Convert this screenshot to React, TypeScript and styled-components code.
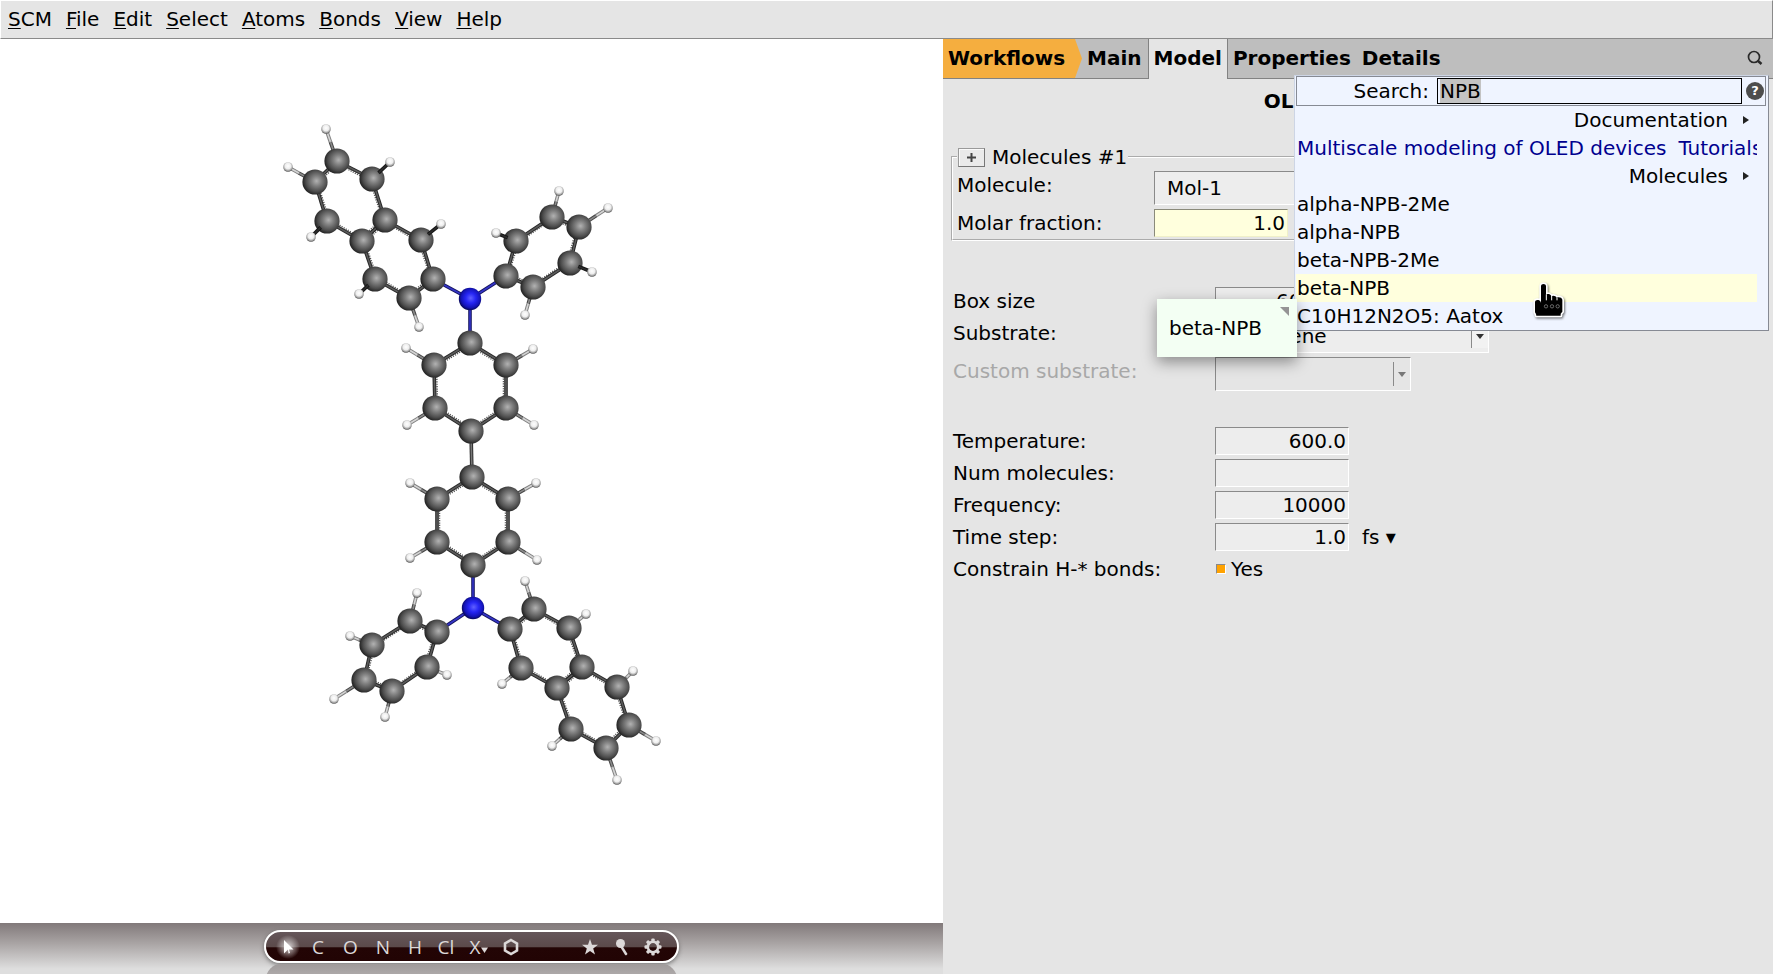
import React from 'react';
import styled, { createGlobalStyle, css } from 'styled-components';

const GlobalStyle = createGlobalStyle`
  *, *::before, *::after { box-sizing: border-box; }
  html, body, #root { height: 100%; }
  body {
    margin: 0;
    background: #e5e5e5;
    color: #000;
    font: 20px/28px "DejaVu Sans", sans-serif;
  }
  button, input, select { font: inherit; color: inherit; }
`;

const bevelIn = css`
  border: 1px solid;
  border-color: #8a8a8a #fff #fff #8a8a8a;
`;

const Window = styled.div`
  display: flex;
  flex-direction: column;
  min-height: 100%;
`;

const MenuBar = styled.nav`
  display: flex;
  height: 39px;
  padding: 0 0 2px;
  border: 1px solid;
  border-color: #fff #8a8a8a #8a8a8a #fff;
`;

const MenuItem = styled.button`
  padding: 0 7px;
  border: 0;
  background: none;
  line-height: 34px;

  u { text-decoration-thickness: 1px; text-underline-offset: 2px; }
`;

const Workspace = styled.main`
  flex: 1;
  display: grid;
  grid-template-columns: minmax(0, 943fr) minmax(0, 830fr);
`;

const Viewer = styled.section`
  display: flex;
  flex-direction: column;
  background: #fff;
`;

const Scene = styled.svg`
  flex: 1;
  display: block;
  width: 100%;
  min-height: 0;
`;

const Dock = styled.div`
  display: flex;
  flex-direction: column;
  align-items: center;
  gap: 1px;
  height: 51px;
  padding-top: 7px;
  overflow: hidden;
  background: linear-gradient(#81797a, #a9a4a4 40%, #dedede 90%);
`;

const Pill = styled.div`
  flex: none;
  display: flex;
  align-items: center;
  width: 415px;
  height: 33px;
  padding: 0 10px;
  border: 2px solid #fff;
  border-radius: 17px;
  background: linear-gradient(#65565a 0, #5b4a4a 52%, #230505 54%, #220404);
  box-shadow: 0 2px 4px #3338;
`;

const PillReflection = styled.div`
  flex: none;
  width: 411px;
  height: 30px;
  border-radius: 15px;
  background: linear-gradient(#a09b9b, #c4c2c2);
`;

const Tool = styled.button<{ $w?: number }>`
  display: flex;
  align-items: center;
  justify-content: center;
  width: ${(p) => p.$w ?? 32}px;
  height: 28px;
  padding: 0;
  border: 0;
  background: none;
  color: #dcd8d8;
  font: 19px/28px "Open Sans", sans-serif;
`;

const ToolGap = styled.span`
  flex: 1;
`;

const Panel = styled.section`
  position: relative;
  min-width: 0;
`;

const Tabs = styled.div`
  display: flex;
  height: 40px;
  background: #bebebe;
  border-bottom: 1px solid #828282;
`;

const Tab = styled.button<{ $active?: boolean }>`
  padding: 0 6px 2px 5px;
  border: 0;
  background: none;
  font-weight: bold;
  line-height: 30px;
  ${(p) =>
    p.$active &&
    css`
      height: 40px;
      background: #e5e5e5;
      border: solid #828282;
      border-width: 0 1px;
      padding: 0 5px 3px;
    `}
`;

const WorkflowTab = styled(Tab)`
  width: 139px;
  text-align: left;
  background: #f5ae3f;
  clip-path: polygon(0 0, 132px 0, 100% 50%, 132px 100%, 0 100%);
`;

const SearchButton = styled.button`
  display: flex;
  align-items: center;
  justify-content: center;
  width: 36px;
  height: 38px;
  margin-left: auto;
  padding: 0;
  border: 0;
  background: none;
`;

const Form = styled.form`
  display: flex;
  flex-direction: column;
  padding: 8px 8px 0;
`;

const Title = styled.h1`
  margin: 0 0 30px;
  font-size: 20px;
  line-height: 28px;
  text-align: center;
`;

const Group = styled.fieldset`
  min-width: 0;
  margin: 0 0 44px;
  padding: 0 0 0 4px;
  border: 2px groove #fff;
`;

const GroupLegend = styled.legend`
  display: flex;
  align-items: center;
  gap: 7px;
  height: 24px;
  padding: 0 1px;
`;

const AddButton = styled.button`
  display: flex;
  align-items: center;
  justify-content: center;
  width: 27px;
  height: 19px;
  padding: 0;
  background: #eaeaea;
  border: 1px solid;
  border-color: #9a9a9a #777 #777 #9a9a9a;
  box-shadow: inset 1px 1px #fafafa;
`;

const Row = styled.div<{ $label?: number; $disabled?: boolean }>`
  display: grid;
  grid-template-columns: ${(p) => p.$label ?? 262}px auto 1fr;
  padding: 2px 0;
  min-height: 32px;
  color: ${(p) => (p.$disabled ? '#a8a8a8' : '#000')};
`;

const Settings = styled.div`
  padding-left: 2px;
`;

const Spacer = styled.div`
  height: 32px;
`;

const NumberBox = styled.input<{ $changed?: boolean }>`
  ${bevelIn}
  display: block;
  width: 134px;
  height: 28px;
  padding: 0 2px;
  text-align: right;
  background: ${(p) => (p.$changed ? '#ffffdd' : '#ededed')};
  ${(p) => p.$changed && 'border-color: #8a8a7a #f0f0c8 #f0f0c8 #8a8a7a;'}
`;

const SelectFrame = styled.span<{ $w: number; $off?: boolean }>`
  ${bevelIn}
  display: flex;
  align-items: center;
  width: ${(p) => p.$w}px;
  height: 34px;
  background: ${(p) => (p.$off ? '#e5e5e5' : '#ededed')};
`;

const SelectBox = styled.select`
  flex: 1;
  min-width: 0;
  height: 32px;
  padding: 0 0 0 12px;
  border: 0;
  background: none;
  appearance: none;
`;

const SelectArrow = styled.span<{ $off?: boolean }>`
  display: flex;
  align-items: center;
  justify-content: center;
  width: 17px;
  height: 24px;
  border-left: 1px solid #8a8a8a;
  background: ${(p) => (p.$off ? 'none' : '#f2f2f2')};
`;

const UnitButton = styled.button`
  justify-self: start;
  padding: 0;
  margin-left: 13px;
  border: 0;
  background: none;
`;

const CheckLabel = styled.label`
  display: flex;
  align-items: center;
  gap: 5px;
  height: 28px;
`;

const CheckBox = styled.input`
  ${bevelIn}
  appearance: none;
  width: 10px;
  height: 10px;
  margin: 0 0 0 1px;
  background: #e5e5e5;
  &:checked { background: #ffa200; }
`;

const Popup = styled.aside`
  position: absolute;
  top: 36px;
  right: 4px;
  width: 475px;
  padding: 0 2px 0 1px;
  background: #eff4ff;
  border: 1px solid;
  border-color: #cdd5e5 #868a94 #868a94 #cdd5e5;
`;

const SearchRow = styled.div`
  display: flex;
  align-items: center;
  height: 30px;
  border: 1px solid #868a94;
`;

const SearchLabel = styled.label`
  flex: 1;
  padding-right: 8px;
  text-align: right;
`;

const SearchInput = styled.input`
  width: 305px;
  height: 26px;
  padding: 0 2px;
  border: 1px solid #000;
  background: #eff4ff;
  outline: none;
  &::selection { background: #c3c3c3; color: #000; }
`;

const HelpButton = styled.button`
  width: 18px;
  height: 18px;
  margin: 0 1px 0 4px;
  padding: 0;
  border: 0;
  border-radius: 50%;
  background: #4d4d4d;
  color: #fff;
  font-size: 13px;
  font-weight: bold;
  line-height: 18px;
`;

const Results = styled.div`
  display: flex;
  flex-direction: column;
  margin-right: 9px;
`;

const Heading = styled.button`
  display: flex;
  align-items: center;
  justify-content: flex-end;
  gap: 15px;
  height: 28px;
  padding: 0 8px 0 0;
  border: 0;
  background: none;
`;

const Result = styled.a<{ $hot?: boolean; $doc?: boolean }>`
  display: flex;
  gap: 12px;
  height: 28px;
  padding-left: 1px;
  overflow: hidden;
  white-space: nowrap;
  text-decoration: none;
  color: ${(p) => (p.$doc ? '#00008f' : '#000')};
  background: ${(p) => (p.$hot ? '#ffffdd' : 'none')};
`;

const Balloon = styled.div`
  position: absolute;
  top: 223px;
  right: 471px;
  width: 140px;
  height: 58px;
  padding: 15px 12px;
  background: #f3fff3;
  box-shadow: 0 5px 14px #0006;

  &::after {
    content: "";
    position: absolute;
    top: 8px;
    right: 8px;
    border: solid transparent;
    border-width: 9px 0 0 9px;
    border-top-color: #949494;
  }
`;

const Pointer = styled.svg`
  position: absolute;
  top: 205px;
  right: 200px;
`;

type Kind = 'C' | 'N' | 'H';
type Atom = [Kind, number, number];

const atoms: Atom[] = [
  ['C', 337, 161], ['C', 315, 182], ['C', 372, 179], ['C', 327, 221], ['C', 385, 220],
  ['C', 362, 241], ['C', 421, 240], ['C', 375, 279], ['C', 409, 298], ['C', 433, 279],
  ['N', 470, 299], ['C', 506, 276], ['C', 516, 241], ['C', 552, 217], ['C', 579, 227],
  ['C', 570, 263], ['C', 533, 287], ['C', 470, 343], ['C', 434, 365], ['C', 506, 365],
  ['C', 435, 408], ['C', 506, 408], ['C', 471, 431], ['C', 472, 477], ['C', 437, 499],
  ['C', 508, 499], ['C', 437, 542], ['C', 508, 542], ['C', 473, 565], ['N', 473, 608],
  ['C', 437, 632], ['C', 410, 621], ['C', 372, 645], ['C', 364, 680], ['C', 392, 691],
  ['C', 427, 667], ['C', 510, 629], ['C', 534, 609], ['C', 569, 628], ['C', 521, 668],
  ['C', 557, 688], ['C', 582, 667], ['C', 617, 687], ['C', 571, 729], ['C', 606, 748],
  ['C', 629, 725],
];

// [carbon index, x, y, drawn dark in front of the carbon]
const hydrogens: [number, number, number, boolean][] = [
  [0, 326, 129, false], [1, 288, 167, false], [2, 390, 162, true], [3, 311, 237, true],
  [6, 441, 224, true], [7, 359, 294, true], [8, 419, 327, false], [12, 496, 233, true],
  [13, 559, 191, false], [14, 608, 208, false], [15, 592, 272, true], [16, 525, 315, false],
  [18, 406, 348, false], [19, 533, 349, false], [20, 407, 425, false], [21, 534, 425, false],
  [24, 410, 483, false], [25, 536, 483, false], [26, 410, 558, false], [27, 537, 560, false],
  [31, 417, 593, false], [32, 350, 636, false], [33, 334, 699, false], [34, 385, 717, false],
  [35, 447, 675, false], [37, 525, 581, false], [38, 586, 614, false], [39, 502, 684, false],
  [42, 633, 671, false], [43, 552, 746, false], [44, 617, 780, false], [45, 656, 741, false],
];

const rings = [
  [0, 2, 4, 5, 3, 1], [4, 6, 9, 8, 7, 5], [11, 12, 13, 14, 15, 16], [17, 19, 21, 22, 20, 18],
  [23, 25, 27, 28, 26, 24], [30, 31, 32, 33, 34, 35], [36, 37, 38, 41, 40, 39],
  [41, 42, 45, 44, 43, 40],
];

const links: [number, number][] = [
  [10, 9], [10, 11], [10, 17], [22, 23], [29, 28], [29, 30], [29, 36],
];

const radius: Record<Kind, number> = { C: 12.6, N: 11.2, H: 4.8 };

function Rod({ x1, y1, x2, y2, edge, core }: {
  x1: number; y1: number; x2: number; y2: number; edge: string; core: string;
}) {
  return (
    <g>
      <line x1={x1} y1={y1} x2={x2} y2={y2} stroke={edge} strokeWidth={3.6} />
      <line x1={x1} y1={y1} x2={x2} y2={y2} stroke={core} strokeWidth={1.6} />
    </g>
  );
}

function Ring({ members }: { members: number[] }) {
  const cx = members.reduce((s, i) => s + atoms[i][1], 0) / members.length;
  const cy = members.reduce((s, i) => s + atoms[i][2], 0) / members.length;
  return (
    <g>
      {members.map((a, n) => {
        const b = members[(n + 1) % members.length];
        const [, x1, y1] = atoms[a];
        const [, x2, y2] = atoms[b];
        const inward = (x: number, y: number): [number, number] => {
          const d = Math.hypot(cx - x, cy - y);
          return [x + ((cx - x) / d) * 3, y + ((cy - y) / d) * 3];
        };
        const [ix1, iy1] = inward(x1, y1);
        const [ix2, iy2] = inward(x2, y2);
        return (
          <g key={a}>
            <line x1={ix1} y1={iy1} x2={ix2} y2={iy2} stroke="#555" strokeWidth={1.4} strokeDasharray="1.2 1.2" />
            <Rod x1={x1} y1={y1} x2={x2} y2={y2} edge="#262626" core="#5a5a5a" />
          </g>
        );
      })}
    </g>
  );
}

function Molecule() {
  return (
    <Scene viewBox="0 39 943 884" role="img" aria-label="beta-NPB molecule">
      <defs>
        <radialGradient id="ballC" cx="0.56" cy="0.46" r="0.56">
          <stop offset="0" stopColor="#b2b2b2" />
          <stop offset="0.35" stopColor="#808080" />
          <stop offset="0.75" stopColor="#4c4c4c" />
          <stop offset="1" stopColor="#222" />
        </radialGradient>
        <radialGradient id="ballN" cx="0.53" cy="0.46" r="0.56">
          <stop offset="0" stopColor="#6060ff" />
          <stop offset="0.4" stopColor="#2626f4" />
          <stop offset="0.75" stopColor="#1414b8" />
          <stop offset="1" stopColor="#06064a" />
        </radialGradient>
        <radialGradient id="ballH" cx="0.5" cy="0.4" r="0.6">
          <stop offset="0" stopColor="#fff" />
          <stop offset="0.5" stopColor="#eee" />
          <stop offset="0.8" stopColor="#a0a0a0" />
          <stop offset="1" stopColor="#444" />
        </radialGradient>
      </defs>
      {rings.map((r) => <Ring key={r.join()} members={r} />)}
      {links.map(([a, b]) => {
        const [ka, x1, y1] = atoms[a];
        const [, x2, y2] = atoms[b];
        return (
          <Rod key={`${a}-${b}`} x1={x1} y1={y1} x2={x2} y2={y2}
            edge={ka === 'N' ? '#15155c' : '#2c2c2c'} core={ka === 'N' ? '#3434c8' : '#777'} />
        );
      })}
      {hydrogens.filter((h) => !h[3]).map(([c, x, y]) => {
        const [, cx, cy] = atoms[c];
        const mx = cx + (x - cx) * 0.6;
        const my = cy + (y - cy) * 0.6;
        return (
          <g key={`${x}-${y}`}>
            <Rod x1={cx} y1={cy} x2={mx} y2={my} edge="#444" core="#8a8a8a" />
            <Rod x1={mx} y1={my} x2={x} y2={y} edge="#808080" core="#d4d4d4" />
          </g>
        );
      })}
      {atoms.map(([k, x, y]) => (
        <circle key={`${x}-${y}`} cx={x} cy={y} r={radius[k]} fill={`url(#ball${k})`} />
      ))}
      {hydrogens.filter((h) => h[3]).map(([c, x, y]) => {
        const [, cx, cy] = atoms[c];
        const d = Math.hypot(x - cx, y - cy);
        const sx = cx + ((x - cx) / d) * 9;
        const sy = cy + ((y - cy) / d) * 9;
        return <Rod key={`${x}-${y}`} x1={sx} y1={sy} x2={x} y2={y} edge="#161616" core="#2c2c2c" />;
      })}
      {hydrogens.map(([, x, y]) => (
        <circle key={`${x}-${y}`} cx={x} cy={y} r={radius.H} fill="url(#ballH)" />
      ))}
    </Scene>
  );
}

const gearTeeth = Array.from({ length: 8 }, (_, i) => i * 45);

function Toolbar() {
  return (
    <Dock>
      <Pill role="toolbar" aria-label="Drawing tools">
        <Tool $w={26} aria-label="Select">
          <svg width="26" height="28" viewBox="0 0 26 28">
            <defs>
              <radialGradient id="glow">
                <stop offset="0" stopColor="#fff" stopOpacity="0.8" />
                <stop offset="1" stopColor="#fff" stopOpacity="0" />
              </radialGradient>
            </defs>
            <circle cx="12" cy="14" r="12" fill="url(#glow)" />
            <path d="M8 7v13.500l4-4 .5 4 1.500-.5-1-3.500h4.500z" fill="#fff" />
          </svg>
        </Tool>
        <Tool>C</Tool>
        <Tool $w={33}>O</Tool>
        <Tool>N</Tool>
        <Tool>H</Tool>
        <Tool $w={30}>Cl</Tool>
        <Tool $w={36} aria-label="X">
          X
          <svg width="8" height="14" viewBox="0 0 8 14"><path d="M1 7.500h7l-3.500 5.500z" fill="#dcd8d8" /></svg>
        </Tool>
        <Tool $w={28} aria-label="Rings">
          <svg width="16" height="18" viewBox="0 0 16 18">
            <path d="M8 2l6 3.500v7L8 16l-6-3.500v-7z" fill="none" stroke="#dcd8d8" strokeWidth="2.600" />
          </svg>
        </Tool>
        <ToolGap />
        <Tool aria-label="Favourites">
          <svg width="16" height="16" viewBox="0 0 16 16">
            <path d="M8 0l2 5.700 6 .1-4.800 3.700 1.800 6L8 12l-5 3.500 1.800-6L0 5.800l6-.1z" fill="#dcd8d8" />
          </svg>
        </Tool>
        <Tool aria-label="Tools">
          <svg width="14" height="18" viewBox="0 0 14 18">
            <path d="M6 8l5 8" stroke="#dcd8d8" strokeWidth="2.500" strokeLinecap="round" />
            <circle cx="5.500" cy="5.500" r="4.500" fill="#dcd8d8" />
          </svg>
        </Tool>
        <Tool $w={29} aria-label="Settings">
          <svg width="18" height="18" viewBox="-9 -9 18 18">
            {gearTeeth.map((a) => (
              <rect key={a} x="-1.700" y="-8.500" width="3.400" height="4" rx="1" fill="#dcd8d8" transform={`rotate(${a})`} />
            ))}
            <circle r="5.200" fill="none" stroke="#dcd8d8" strokeWidth="2.600" />
          </svg>
        </Tool>
      </Pill>
      <PillReflection />
    </Dock>
  );
}

function Dropdown({ id, width, value, off }: { id: string; width: number; value?: string; off?: boolean }) {
  return (
    <SelectFrame $w={width} $off={off}>
      <SelectBox id={id} disabled={off}>{value && <option>{value}</option>}</SelectBox>
      <SelectArrow $off={off}>
        <svg width="8" height="5" viewBox="0 0 8 5"><path d="M0 0h8L4 5z" fill={off ? '#777' : '#333'} /></svg>
      </SelectArrow>
    </SelectFrame>
  );
}

function NumberRow({ id, label, value, changed, labelWidth, children }: {
  id: string; label: string; value: string; changed?: boolean; labelWidth?: number; children?: React.ReactNode;
}) {
  return (
    <Row $label={labelWidth}>
      <label htmlFor={id}>{label}</label>
      <NumberBox id={id} defaultValue={value} $changed={changed} />
      {children}
    </Row>
  );
}

function SearchPopup() {
  const field = React.useRef<HTMLInputElement>(null);
  React.useEffect(() => {
    field.current?.focus();
    field.current?.select();
  }, []);
  const arrow = (
    <svg width="6" height="10" viewBox="0 0 6 10"><path d="M0 1l6 4-6 4z" fill="#222" /></svg>
  );
  return (
    <Popup>
      <SearchRow>
        <SearchLabel htmlFor="search">Search:</SearchLabel>
        <SearchInput id="search" ref={field} defaultValue="NPB" />
        <HelpButton type="button">?</HelpButton>
      </SearchRow>
      <Results>
        <Heading type="button">Documentation {arrow}</Heading>
        <Result href="#tutorial" $doc>
          <span>Multiscale modeling of OLED devices</span>
          <span>Tutorials</span>
        </Result>
        <Heading type="button">Molecules {arrow}</Heading>
        <Result href="#m1">alpha-NPB-2Me</Result>
        <Result href="#m2">alpha-NPB</Result>
        <Result href="#m3">beta-NPB-2Me</Result>
        <Result href="#m4" $hot>beta-NPB</Result>
        <Result href="#m5">C10H12N2O5: Aatox</Result>
      </Results>
      <Balloon role="tooltip">beta-NPB</Balloon>
      <Pointer width="36" height="40" viewBox="0 0 108 120">
        <g style={{ filter: 'drop-shadow(3px 4px 3px #0008)' }}>
          <path
            d="M27 16c0-9 15-9 15 0v25c2-3 14-3 16 5 4-4 14-2 16 4 6-3 16-1 17 6v36l-5 6v6H13l-1-5-3-5V64c0-9 12-9 16-3l2 4z"
            fill="#000" stroke="#fff" strokeWidth="10" strokeLinejoin="round" paintOrder="stroke"
          />
        </g>
        <path d="M43 40v18M59 45v13M75 50v8" stroke="#fff" strokeWidth="3" />
        <g fill="none" stroke="#999" strokeWidth="2">
          <circle cx="42" cy="76" r="5" /><circle cx="60" cy="76" r="5" /><circle cx="77" cy="76" r="5" />
        </g>
      </Pointer>
    </Popup>
  );
}

const menus = ['SCM', 'File', 'Edit', 'Select', 'Atoms', 'Bonds', 'View', 'Help'];

export default function App() {
  return (
    <Window>
      <GlobalStyle />
      <MenuBar>
        {menus.map((m) => (
          <MenuItem key={m}><u>{m[0]}</u>{m.slice(1)}</MenuItem>
        ))}
      </MenuBar>
      <Workspace>
        <Viewer>
          <Molecule />
          <Toolbar />
        </Viewer>
        <Panel>
          <Tabs>
            <WorkflowTab>Workflows</WorkflowTab>
            <Tab>Main</Tab>
            <Tab $active>Model</Tab>
            <Tab>Properties</Tab>
            <Tab>Details</Tab>
            <SearchButton aria-label="Search">
              <svg width="16" height="16" viewBox="0 0 16 16" fill="none" stroke="#2a2a2a">
                <circle cx="7" cy="7" r="5.500" strokeWidth="1.700" />
                <path d="M10.500 10.500l4 3.500" strokeWidth="2.500" />
              </svg>
            </SearchButton>
          </Tabs>
          <Form>
            <Title>OLED Deposition</Title>
            <Group>
              <GroupLegend>
                <AddButton type="button" aria-label="Add molecule">
                  <svg width="9" height="9" viewBox="0 0 9 9"><path d="M4.500 0v9M0 4.500h9" stroke="#444" strokeWidth="2" /></svg>
                </AddButton>
                Molecules #1
              </GroupLegend>
              <Row $label={197}>
                <label htmlFor="molecule">Molecule:</label>
                <Dropdown id="molecule" width={274} value="Mol-1" />
              </Row>
              <NumberRow id="fraction" label="Molar fraction:" value="1.0" changed labelWidth={197} />
            </Group>
            <Settings>
              <NumberRow id="box" label="Box size" value="600.00" />
              <Row>
                <label htmlFor="substrate">Substrate:</label>
                <Dropdown id="substrate" width={274} value="Graphene" />
              </Row>
              <Row $disabled>
                <label htmlFor="custom">Custom substrate:</label>
                <Dropdown id="custom" width={196} off />
              </Row>
              <Spacer />
              <NumberRow id="temperature" label="Temperature:" value="600.0" />
              <NumberRow id="count" label="Num molecules:" value="" />
              <NumberRow id="frequency" label="Frequency:" value="10000" />
              <NumberRow id="step" label="Time step:" value="1.0">
                <UnitButton type="button">fs ▾</UnitButton>
              </NumberRow>
              <Row>
                <label htmlFor="constrain">Constrain H-* bonds:</label>
                <CheckLabel>
                  <CheckBox id="constrain" type="checkbox" defaultChecked />
                  Yes
                </CheckLabel>
              </Row>
            </Settings>
          </Form>
          <SearchPopup />
        </Panel>
      </Workspace>
    </Window>
  );
}
